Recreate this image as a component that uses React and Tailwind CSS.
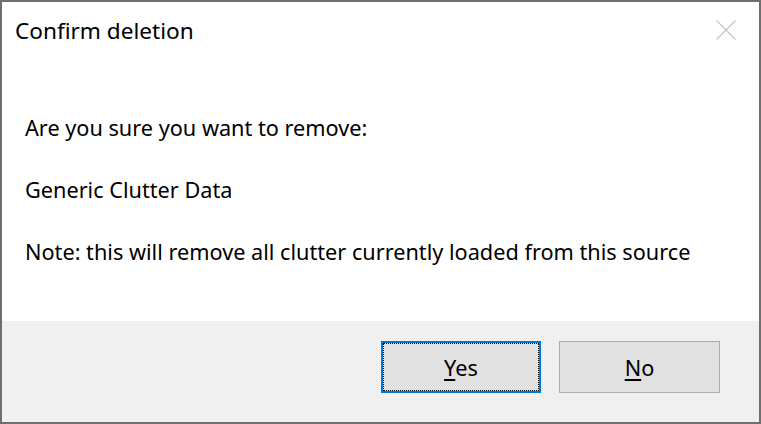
import React from 'react';

function App() {
  return (
    <div className="w-[761px] h-[424px] bg-white border-2 border-[#6f6f6f] flex flex-col text-black font-['Noto_Sans',sans-serif]">
      <div className="relative h-[62px] shrink-0">
        <div className="absolute left-[13px] top-[15px] text-[22.6px] leading-[28px]">Confirm deletion</div>
        <svg className="absolute right-[23px] top-[18px]" width="20" height="20" viewBox="0 0 20 20">
          <path d="M0.5 0.5 L19.5 19.5 M19.5 0.5 L0.5 19.5" stroke="#c4c4c4" strokeWidth="1.2" fill="none" />
        </svg>
      </div>
      <div className="flex-1 pl-[23px] pt-[50px] text-[21.7px] leading-[28px] flex flex-col gap-[34px]">
        <div>Are you sure you want to remove:</div>
        <div>Generic Clutter Data</div>
        <div>Note: this will remove all clutter currently loaded from this source</div>
      </div>
      <div className="h-[101px] shrink-0 bg-[#f0f0f0] flex justify-end items-start pt-[20px] pr-[39px] gap-[18px]">
        <button className="w-[160px] h-[52px] border-2 border-[#0078d7] bg-[#e1e1e1] flex p-0">
          <div className="flex-1 h-full border border-dotted border-black flex items-center justify-center text-[21.7px] pt-[2px]">
            <span><span className="underline underline-offset-[3px]">Y</span>es</span>
          </div>
        </button>
        <button className="w-[161px] h-[52px] border border-[#adadad] bg-[#e1e1e1] flex items-center justify-center text-[21.7px] pt-[2px]">
          <span><span className="underline underline-offset-[3px]">N</span>o</span>
        </button>
      </div>
    </div>
  );
}

export default App;
